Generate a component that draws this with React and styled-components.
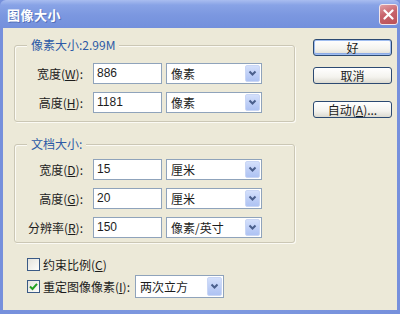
import React from "react";
import styled, { createGlobalStyle } from "styled-components";

const Global = createGlobalStyle`
  html, body { margin: 0; padding: 0; background: #7b96dd; }
  body { width: 400px; height: 314px; overflow: hidden; }
`;

const CJK = `"Noto Sans CJK SC", "Noto Sans", sans-serif`;
const NUM = `"Liberation Sans", "Noto Sans CJK SC", sans-serif`;

const Window = styled.div`
  width: 400px;
  height: 314px;
  display: flex;
  flex-direction: column;
  background: linear-gradient(90deg, #7690dc, #7f9ae0 50%, #7690dc);
  font-family: ${CJK};
  font-size: 12px;
  color: #1c1c1c;
`;

const TitleBar = styled.div`
  height: 28px;
  flex: none;
  display: flex;
  align-items: center;
  justify-content: space-between;
  padding: 0 2px 0 7px;
  background: linear-gradient(180deg, #a9bdf0 0%, #88a3e6 18%, #7b97e0 55%, #7390dc 100%);
  border-radius: 6px 6px 0 0;
`;

const Title = styled.span`
  color: #fff;
  font-size: 13px;
  font-weight: bold;
  letter-spacing: 0.5px;
  text-shadow: 1px 1px 0 #5470b8;
`;

const CloseButton = styled.div`
  width: 19px;
  height: 21px;
  border-radius: 3px;
  border: 1px solid #f3e6ea;
  background: linear-gradient(160deg, #e0a0a6 0%, #c8646c 45%, #b95058 100%);
  display: flex;
  align-items: center;
  justify-content: center;
  box-sizing: border-box;
`;

const Body = styled.div`
  flex: 1;
  margin: 0 3px 4px 3px;
  background: #ece9d8;
  display: flex;
  padding: 0 5px 0 11px;
`;

const LeftColumn = styled.div`
  width: 281px;
  display: flex;
  flex-direction: column;
`;

const RightColumn = styled.div`
  width: 79px;
  margin-left: 18px;
  padding-top: 11px;
  display: flex;
  flex-direction: column;
`;

const Group = styled.div`
  position: relative;
  box-sizing: border-box;
  margin-top: ${(p) => p.$top}px;
  height: ${(p) => p.$h}px;
  padding-top: ${(p) => p.$pad}px;
  border: 1px solid #cbc7b5;
  border-radius: 3px;
  box-shadow: inset 1px 1px 0 #fbfaf4, 1px 1px 0 #fbfaf4;
  display: flex;
  flex-direction: column;
  gap: 8px;
`;

const Legend = styled.span`
  position: absolute;
  top: -9px;
  left: 12px;
  padding: 0 4px;
  background: #ece9d8;
  color: #2d5aa6;
  line-height: 16px;
`;

const Row = styled.div`
  display: grid;
  grid-template-columns: 68px 69px 96px;
  column-gap: 10px;
  align-items: center;
  height: 21px;
  & > :nth-child(3) { margin-left: -6px; }
`;

const Label = styled.label`
  text-align: right;
  white-space: nowrap;
  line-height: 21px;
`;

const Input = styled.div`
  box-sizing: border-box;
  height: 21px;
  border: 1px solid #8fa3bb;
  background: #fff;
  padding-left: 3px;
  font-family: ${NUM};
  font-size: 12px;
  line-height: 19px;
`;

const SelectBox = styled.div`
  box-sizing: border-box;
  width: ${(p) => p.$w}px;
  height: ${(p) => p.$h || 21}px;
  border: 1px solid #8fa3bb;
  background: #fff;
  display: flex;
  align-items: center;
  justify-content: space-between;
  padding: 1px 1px 1px 4px;
`;

const SelectText = styled.span`
  white-space: nowrap;
`;

const DropButton = styled.div`
  width: 15px;
  align-self: stretch;
  border-radius: 2px;
  background: linear-gradient(180deg, #d4e0fb 0%, #bccdf6 60%, #aec3f3 100%);
  border: 1px solid #c9d6f5;
  box-sizing: border-box;
  display: flex;
  align-items: center;
  justify-content: center;
`;

const Button = styled.div`
  box-sizing: border-box;
  height: 17px;
  margin-top: ${(p) => p.$mt || 0}px;
  border: 1px solid #2c4a72;
  border-radius: 3px;
  background: linear-gradient(180deg, #ffffff 0%, #f4f3ee 60%, #dcdad0 100%);
  box-shadow: ${(p) => (p.$default ? "inset 0 0 0 1px #9fbdf0, inset 0 -1px 0 1px #8cabe6" : "none")};
  display: flex;
  align-items: center;
  justify-content: center;
  line-height: 15px;
  white-space: nowrap;
`;

const CheckRow = styled.div`
  display: flex;
  align-items: center;
  padding-left: 13px;
  height: ${(p) => p.$h}px;
  margin-top: ${(p) => p.$mt}px;
`;

const CheckBox = styled.div`
  box-sizing: border-box;
  width: 13px;
  height: 13px;
  border: 1px solid #3a5a86;
  background: linear-gradient(135deg, #e4e3dc, #fdfdfb);
  display: flex;
  align-items: center;
  justify-content: center;
  margin-right: 3px;
`;

const CheckLabel = styled.span`
  white-space: nowrap;
  margin-right: 5px;
`;

const Chevron = () => (
  <svg width="9" height="7" viewBox="0 0 9 7">
    <path d="M1.5 1.5 L4.5 4.5 L7.5 1.5" fill="none" stroke="#4a5f8c" strokeWidth="2" />
  </svg>
);

const Select = ({ children, w, h }) => (
  <SelectBox $w={w} $h={h}>
    <SelectText>{children}</SelectText>
    <DropButton>
      <Chevron />
    </DropButton>
  </SelectBox>
);

const Field = ({ label, k, value, unit }) => (
  <Row>
    <Label>
      {label}(<u>{k}</u>):
    </Label>
    <Input>{value}</Input>
    <Select w={96}>{unit}</Select>
  </Row>
);

export default function App() {
  return (
    <>
      <Global />
      <Window>
        <TitleBar>
          <Title>图像大小</Title>
          <CloseButton>
            <svg width="11" height="11" viewBox="0 0 11 11">
              <path d="M1.5 1.5 L9.5 9.5 M9.5 1.5 L1.5 9.5" stroke="#fff" strokeWidth="2.2" strokeLinecap="round" />
            </svg>
          </CloseButton>
        </TitleBar>
        <Body>
          <LeftColumn>
            <Group $top={17} $h={77} $pad={17}>
              <Legend>像素大小:2.99M</Legend>
              <Field label="宽度" k="W" value="886" unit="像素" />
              <Field label="高度" k="H" value="1181" unit="像素" />
            </Group>
            <Group $top={22} $h={99} $pad={14}>
              <Legend>文档大小:</Legend>
              <Field label="宽度" k="D" value="15" unit="厘米" />
              <Field label="高度" k="G" value="20" unit="厘米" />
              <Field label="分辨率" k="R" value="150" unit="像素/英寸" />
            </Group>
            <CheckRow $h={16} $mt={13}>
              <CheckBox />
              <CheckLabel>
                约束比例(<u>C</u>)
              </CheckLabel>
            </CheckRow>
            <CheckRow $h={23} $mt={3}>
              <CheckBox>
                <svg width="9" height="9" viewBox="0 0 9 9">
                  <path d="M1 4.5 L3.5 7 L8 1.8" fill="none" stroke="#22a022" strokeWidth="2" />
                </svg>
              </CheckBox>
              <CheckLabel>
                重定图像像素(<u>I</u>):
              </CheckLabel>
              <Select w={89} h={23}>两次立方</Select>
            </CheckRow>
          </LeftColumn>
          <RightColumn>
            <Button $default>好</Button>
            <Button $mt={11}>取消</Button>
            <Button $mt={17}>
              自动(<u>A</u>)...
            </Button>
          </RightColumn>
        </Body>
      </Window>
    </>
  );
}
